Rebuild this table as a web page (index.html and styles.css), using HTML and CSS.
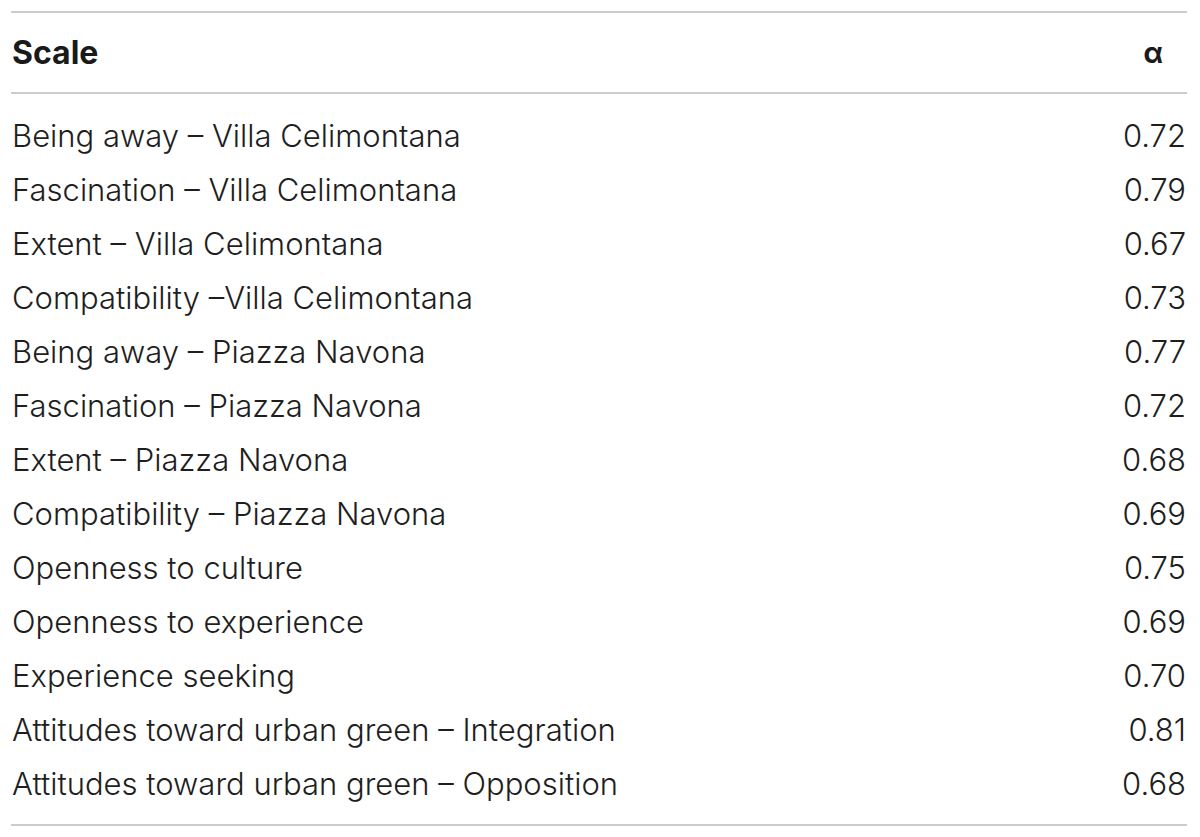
FILE: index.html
```html
<!DOCTYPE html>
<html>
<head>
<meta charset="utf-8">
<link rel="stylesheet" href="styles.css">
</head>
<body>
<div class="tbl">
  <div class="head">
    <span class="name">Scale</span><span class="alpha">α</span>
  </div>
  <div class="rows">
    <div class="row"><span>Being away – Villa Celimontana</span><span>0.72</span></div>
    <div class="row"><span>Fascination – Villa Celimontana</span><span>0.79</span></div>
    <div class="row"><span>Extent – Villa Celimontana</span><span>0.67</span></div>
    <div class="row"><span>Compatibility –Villa Celimontana</span><span>0.73</span></div>
    <div class="row"><span>Being away – Piazza Navona</span><span>0.77</span></div>
    <div class="row"><span>Fascination – Piazza Navona</span><span>0.72</span></div>
    <div class="row"><span>Extent – Piazza Navona</span><span>0.68</span></div>
    <div class="row"><span>Compatibility – Piazza Navona</span><span>0.69</span></div>
    <div class="row"><span>Openness to culture</span><span>0.75</span></div>
    <div class="row"><span>Openness to experience</span><span>0.69</span></div>
    <div class="row"><span>Experience seeking</span><span>0.70</span></div>
    <div class="row"><span>Attitudes toward urban green – Integration</span><span>0.81</span></div>
    <div class="row"><span>Attitudes toward urban green – Opposition</span><span>0.68</span></div>
  </div>
</div>
</body>
</html>
```

FILE: styles.css
```css
html, body {
  margin: 0;
  padding: 0;
  background: #ffffff;
}
body {
  padding: 11px 0 0 11px;
  font-family: "Inter", "Liberation Sans", Arial, sans-serif;
  color: #1e1e1e;
}
.tbl {
  width: 1176px;
  border-top: 2px solid #cccccc;
  border-bottom: 2px solid #cccccc;
}
.head {
  height: 79px;
  display: flex;
  justify-content: space-between;
  align-items: center;
  border-bottom: 2px solid #cccccc;
  padding: 0 24px 0 1px;
  font-size: 32px;
  font-weight: 700;
  color: #1a1a1a;
}
.alpha {
  font-size: 28px;
}
.rows {
  padding: 14px 0;
}
.row {
  height: 54px;
  display: flex;
  justify-content: space-between;
  align-items: center;
  padding: 0 1px 0 1px;
  font-size: 31px;
  font-weight: 300;
}
```
